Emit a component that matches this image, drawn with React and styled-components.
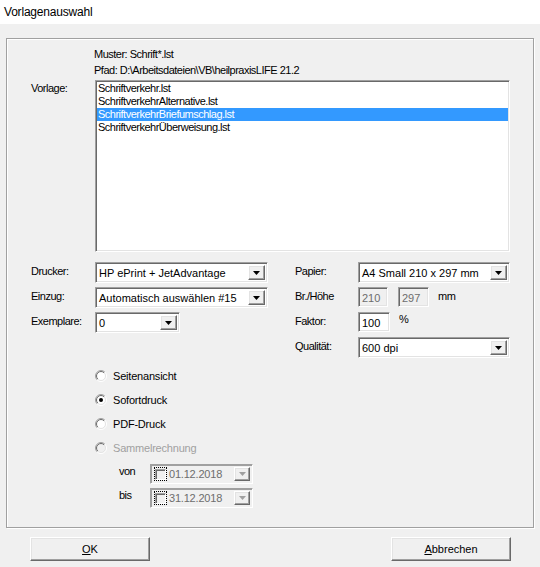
import React from 'react'
import styled, { createGlobalStyle, css } from 'styled-components'

const GlobalStyle = createGlobalStyle`
  body {
    margin: 0;
    background: #f0f0f0;
    font-family: "Liberation Sans", Arial, sans-serif;
    font-size: 11px;
    color: #000;
  }
`

// classic 3D borders
const sunken = css`
  box-sizing: border-box;
  border: 1px solid;
  border-color: #a0a0a0 #fff #fff #a0a0a0;
  box-shadow: inset 1px 1px 0 #696969, inset -1px -1px 0 #e3e3e3;
`
const raised = css`
  box-sizing: border-box;
  border: 1px solid;
  border-color: #fff #696969 #696969 #fff;
  box-shadow: inset -1px -1px 0 #a0a0a0, inset 1px 1px 0 #e3e3e3;
`

const Window = styled.div`
  width: 540px;
  height: 567px;
  display: flex;
  flex-direction: column;
  background: #f0f0f0;
  overflow: hidden;
`
const TitleBar = styled.div`
  height: 24px;
  flex: none;
  background: #fff;
  display: flex;
  align-items: center;
  padding-left: 4px;
  font-size: 12px;
  letter-spacing: -0.2px;
`
const Group = styled.div`
  box-sizing: border-box;
  margin: 14px 0 0 6px;
  width: 528px;
  height: 490px;
  border: 1px solid #a0a0a0;
  box-shadow: inset 1px 1px 0 #fff, 1px 1px 0 #fff;
`
const Static = styled.div`
  line-height: 13px;
  letter-spacing: -0.5px;
  color: ${p => (p.disabled ? '#a0a0a0' : '#000')};
`
const Header = styled.div`
  padding: 9px 0 0 87px;
  display: flex;
  flex-direction: column;
  gap: 3px;
`
const Row = styled.div`
  display: flex;
  align-items: flex-start;
  padding-left: ${p => p.indent || 0}px;
  margin-top: ${p => p.top || 0}px;
`
const Label = styled(Static)`
  width: ${p => p.w}px;
  flex: none;
  padding-top: ${p => (p.pt == null ? 3 : p.pt)}px;
`
const ListBox = styled.div`
  ${sunken};
  width: 415px;
  height: 172px;
  background: #fff;
  padding: 1px;
`
const ListItem = styled(Static)`
  padding-left: 1px;
  background: ${p => (p.selected ? '#3399ff' : 'transparent')};
  color: ${p => (p.selected ? '#fff' : '#000')};
`
const Fields = styled.div`
  display: grid;
  grid-template-columns: 237px 215px;
  column-gap: 27px;
  padding-left: 24px;
  margin-top: 10px;
`
const Column = styled.div`
  display: flex;
  flex-direction: column;
  gap: 4px;
`
const FieldRow = styled.div`
  display: flex;
  align-items: flex-start;
  height: 21px;
`
const ComboBox = styled.div`
  ${sunken};
  width: ${p => p.w}px;
  height: 21px;
  background: ${p => (p.disabled ? '#f0f0f0' : '#fff')};
  padding: 2px;
  display: flex;
`
const ComboText = styled.div`
  flex: 1;
  line-height: 17px;
  padding-left: 1px;
  white-space: nowrap;
  overflow: hidden;
  color: ${p => (p.disabled ? '#6d6d6d' : '#000')};
`
const DropButton = styled.div`
  ${raised};
  width: ${p => p.w || 17}px;
  flex: none;
  background: #f0f0f0;
  display: flex;
  align-items: center;
  justify-content: center;
`
const TextBox = styled.div`
  ${sunken};
  width: ${p => p.w}px;
  height: 20px;
  margin-left: ${p => p.ml || 0}px;
  padding: 2px 3px;
  line-height: 16px;
  background: ${p => (p.disabled ? '#f0f0f0' : '#fff')};
  color: ${p => (p.disabled ? '#6d6d6d' : '#000')};
`
const Unit = styled(Static)`
  margin-left: 9px;
  padding-top: ${p => p.pt}px;
`
const Options = styled.div`
  margin-top: 6px;
  padding-left: 88px;
`
const RadioRow = styled.label`
  display: flex;
  align-items: center;
  gap: 6px;
  height: 24px;
`
const DateList = styled.div`
  margin-top: 4px;
  display: flex;
  flex-direction: column;
  gap: 4px;
  padding-left: 112px;
`
const DateBox = styled.div`
  box-sizing: border-box;
  width: 103px;
  height: 20px;
  border: 1px solid;
  border-color: #a0a0a0 #fff #fff #a0a0a0;
  box-shadow: inset 1px 1px 0 #a0a0a0;
  background: #f0f0f0;
  padding: 2px 2px 2px 3px;
  display: flex;
  align-items: stretch;
`
const FocusRect = styled.div`
  box-sizing: border-box;
  width: 13px;
  border: 1px dotted #000;
  display: flex;
  align-items: center;
  justify-content: center;
`
const CheckSquare = styled.div`
  box-sizing: border-box;
  width: 11px;
  height: 11px;
  border: 1px solid;
  border-color: #a0a0a0 #fff #fff #a0a0a0;
  box-shadow: inset 1px 1px 0 #696969;
  background: #f0f0f0;
`
const DateText = styled.div`
  flex: 1;
  padding-left: 2px;
  line-height: 14px;
  color: #6d6d6d;
  letter-spacing: -0.2px;
`
const Buttons = styled.div`
  display: flex;
  justify-content: space-between;
  padding: 0 29px 0 30px;
  margin-top: 9px;
`
const Button = styled.button`
  ${raised};
  width: 120px;
  height: 24px;
  background: #f0f0f0;
  font: inherit;
  font-size: 11px;
  color: #000;
  padding: 0;
  u { text-decoration: underline; }
`

const Arrow = ({ color = '#000' }) => (
  <svg width="7" height="4" viewBox="0 0 7 4">
    <path d="M0 0h7L3.5 4z" fill={color} />
  </svg>
)

const Combo = ({ w, children }) => (
  <ComboBox w={w}>
    <ComboText>{children}</ComboText>
    <DropButton><Arrow /></DropButton>
  </ComboBox>
)

const Radio = ({ checked, disabled }) => (
  <svg width="12" height="12" viewBox="0 0 12 12">
    <defs>
      <linearGradient id="rOuter" x1="0" y1="0" x2="1" y2="1">
        <stop offset="0.5" stopColor="#a0a0a0" />
        <stop offset="0.5" stopColor="#fff" />
      </linearGradient>
      <linearGradient id="rInner" x1="0" y1="0" x2="1" y2="1">
        <stop offset="0.5" stopColor="#696969" />
        <stop offset="0.5" stopColor="#e3e3e3" />
      </linearGradient>
    </defs>
    <circle cx="6" cy="6" r="5.5" fill="none" stroke="url(#rOuter)" />
    <circle cx="6" cy="6" r="4.5" fill={disabled ? '#f0f0f0' : '#fff'} stroke="url(#rInner)" />
    {checked && <circle cx="6" cy="6" r="2" fill="#000" />}
  </svg>
)

const Option = ({ label, checked, disabled }) => (
  <RadioRow>
    <Radio checked={checked} disabled={disabled} />
    <Static disabled={disabled} style={{ letterSpacing: '-0.2px' }}>{label}</Static>
  </RadioRow>
)

const DateField = ({ label, value }) => (
  <Row>
    <Label w={31} pt={1}>{label}</Label>
    <DateBox>
      <FocusRect><CheckSquare /></FocusRect>
      <DateText>{value}</DateText>
      <DropButton w={16}><Arrow color="#a0a0a0" /></DropButton>
    </DateBox>
  </Row>
)

const templates = [
  'Schriftverkehr.lst',
  'SchriftverkehrAlternative.lst',
  'SchriftverkehrBriefumschlag.lst',
  'SchriftverkehrÜberweisung.lst'
]

export default function App () {
  return (
    <Window>
      <GlobalStyle />
      <TitleBar>Vorlagenauswahl</TitleBar>
      <Group>
        <Header>
          <Static>Muster: Schrift*.lst</Static>
          <Static>Pfad: D:\Arbeitsdateien\VB\heilpraxisLIFE 21.2</Static>
        </Header>

        <Row indent={24} top={3}>
          <Label w={64} pt={2}>Vorlage:</Label>
          <ListBox>
            {templates.map((t, i) => (
              <ListItem key={t} selected={i === 2}>{t}</ListItem>
            ))}
          </ListBox>
        </Row>

        <Fields>
          <Column>
            <FieldRow>
              <Label w={64}>Drucker:</Label>
              <Combo w={173}>HP ePrint + JetAdvantage</Combo>
            </FieldRow>
            <FieldRow>
              <Label w={64}>Einzug:</Label>
              <Combo w={173}>Automatisch auswählen #15</Combo>
            </FieldRow>
            <FieldRow>
              <Label w={64}>Exemplare:</Label>
              <Combo w={85}>0</Combo>
            </FieldRow>
          </Column>
          <Column>
            <FieldRow>
              <Label w={63}>Papier:</Label>
              <Combo w={152}>A4 Small 210 x 297 mm</Combo>
            </FieldRow>
            <FieldRow>
              <Label w={63}>Br./Höhe</Label>
              <TextBox w={30} disabled>210</TextBox>
              <TextBox w={31} ml={10} disabled>297</TextBox>
              <Unit pt={3}>mm</Unit>
            </FieldRow>
            <FieldRow>
              <Label w={63}>Faktor:</Label>
              <TextBox w={32}>100</TextBox>
              <Unit pt={1}>%</Unit>
            </FieldRow>
            <FieldRow>
              <Label w={63}>Qualität:</Label>
              <Combo w={152}>600 dpi</Combo>
            </FieldRow>
          </Column>
        </Fields>

        <Options>
          <Option label="Seitenansicht" />
          <Option label="Sofortdruck" checked />
          <Option label="PDF-Druck" />
          <Option label="Sammelrechnung" disabled />
        </Options>

        <DateList>
          <DateField label="von" value="01.12.2018" />
          <DateField label="bis" value="31.12.2018" />
        </DateList>
      </Group>

      <Buttons>
        <Button><u>O</u>K</Button>
        <Button><u>A</u>bbrechen</Button>
      </Buttons>
    </Window>
  )
}
